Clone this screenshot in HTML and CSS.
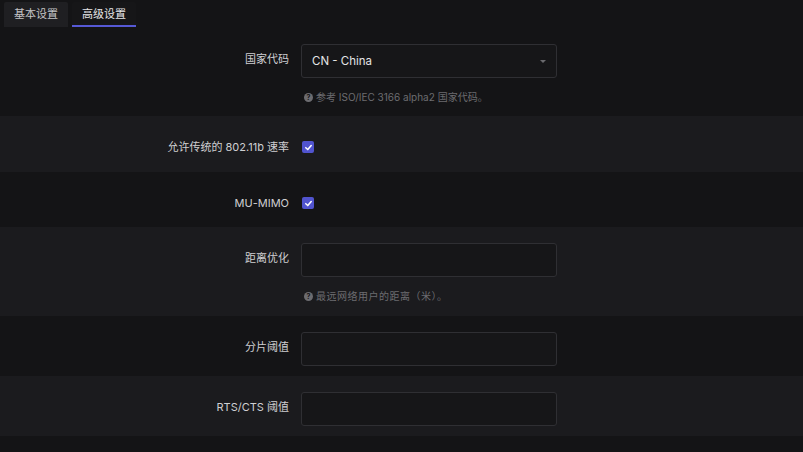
FILE: index.html
```html
<!DOCTYPE html>
<html lang="zh">
<head>
<meta charset="utf-8">
<link rel="stylesheet" href="styles.css">
</head>
<body>
<div class="tabs">
  <div class="tab">基本设置</div>
  <div class="tab active">高级设置</div>
</div>
<div class="form">
  <div class="row">
    <div class="label">国家代码</div>
    <div class="field">
      <div class="input select">CN - China<span class="caret"></span></div>
      <div class="help"><span class="q">?</span>参考 ISO/IEC 3166 alpha2 国家代码。</div>
    </div>
  </div>
  <div class="row alt check-row">
    <div class="label">允许传统的 802.11b 速率</div>
    <div class="field"><span class="checkbox"><svg viewBox="0 0 10 10" width="9" height="9"><path d="M2 5.2 L4.2 7.3 L8 2.8" fill="none" stroke="#fff" stroke-width="1.7" stroke-linecap="round" stroke-linejoin="round"/></svg></span></div>
  </div>
  <div class="row check-row short">
    <div class="label">MU-MIMO</div>
    <div class="field"><span class="checkbox"><svg viewBox="0 0 10 10" width="9" height="9"><path d="M2 5.2 L4.2 7.3 L8 2.8" fill="none" stroke="#fff" stroke-width="1.7" stroke-linecap="round" stroke-linejoin="round"/></svg></span></div>
  </div>
  <div class="row alt tall">
    <div class="label">距离优化</div>
    <div class="field">
      <div class="input"></div>
      <div class="help"><span class="q">?</span><span class="cjk-wide">最远网络用户的距离（米）。</span></div>
    </div>
  </div>
  <div class="row">
    <div class="label">分片阈值</div>
    <div class="field"><div class="input"></div></div>
  </div>
  <div class="row alt">
    <div class="label">RTS/CTS 阈值</div>
    <div class="field"><div class="input"></div></div>
  </div>
</div>
</body>
</html>
```
FILE: styles.css
```css
html, body {
  margin: 0;
  padding: 0;
  background: #141416;
  font-family: "Inter", "Noto Sans CJK SC", sans-serif;
  color: #c9c9cc;
}
.tabs {
  display: flex;
  gap: 4px;
  padding: 2px 4px 0;
  height: 26px;
}
.tab {
  padding: 0 10px;
  height: 25px;
  line-height: 24px;
  font-size: 11px;
  background: #1f1f22;
  color: #c4c4c6;
  border-radius: 2px 2px 0 0;
}
.tab.active {
  background: #161618;
  color: #e6e6e8;
  border-bottom: 2px solid #5659d6;
  height: 23px;
}
.row {
  display: grid;
  grid-template-columns: 289px 256px;
  column-gap: 12px;
  padding: 16px 0 10px;
}
.row.alt {
  background: #1b1b1e;
}
.label {
  text-align: right;
  font-size: 11px;
  line-height: 30px;
  color: #cfcfd2;
}
.check-row .field {
  display: flex;
  align-items: center;
  height: 30px;
}
.row.short { padding-bottom: 9px; }
.row.tall { padding-bottom: 11px; }
.input {
  box-sizing: border-box;
  height: 34px;
  border: 1px solid #2f2f33;
  border-radius: 3px;
  background: #161618;
  font-size: 11.5px;
  line-height: 32px;
  padding: 0 10px;
  color: #e4e4e6;
  position: relative;
}
.caret {
  position: absolute;
  right: 10px;
  top: 15px;
  width: 0;
  height: 0;
  border-left: 3px solid transparent;
  border-right: 3px solid transparent;
  border-top: 3px solid #6a6a6e;
}
.help {
  margin-top: 10px;
  height: 18px;
  line-height: 18px;
  font-size: 10px;
  color: #6c6c70;
  padding-left: 3px;
  display: flex;
  align-items: center;
}
.cjk-wide {
  letter-spacing: 0.5px;
}
.q {
  display: inline-flex;
  align-items: center;
  justify-content: center;
  width: 9px;
  height: 9px;
  border-radius: 50%;
  background: #6c6c70;
  color: #141416;
  font-size: 7px;
  font-weight: 700;
  margin-right: 3px;
  line-height: 1;
}
.checkbox {
  display: inline-flex;
  align-items: center;
  justify-content: center;
  width: 12px;
  height: 12px;
  margin-left: 1px;
  border-radius: 2px;
  background: #5154cf;
}
```
